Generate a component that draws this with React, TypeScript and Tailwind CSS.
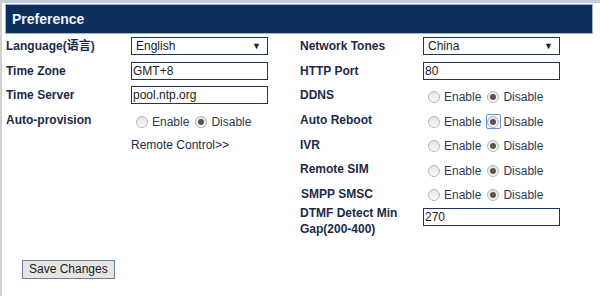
import React from 'react';

const font = { fontFamily: '"Liberation Sans", Arial, "Noto Sans CJK SC", sans-serif' };

const Radio: React.FC<{ checked?: boolean; focus?: boolean }> = ({ checked, focus }) => (
  <span className={focus ? 'inline-flex items-center justify-center w-[15px] h-[15px] -mx-[1.5px] border border-[#6b8fd6] rounded-[2px]' : 'inline-flex'}>
    <span className="inline-flex items-center justify-center w-[12px] h-[12px] rounded-full border border-[#b4b4b4] bg-gradient-to-b from-[#e4e4e4] to-[#fafafa]">
      {checked && <span className="w-[6px] h-[6px] rounded-full bg-[#555]" />}
    </span>
  </span>
);

const Toggle: React.FC<{ focus?: boolean }> = ({ focus }) => (
  <div className="flex items-center pl-[5px] pt-[3px] text-[12px] text-[#2b3a55]">
    <Radio />
    <span className="ml-[4px] mr-[6px]">Enable</span>
    <Radio checked focus={focus} />
    <span className="ml-[4px]">Disable</span>
  </div>
);

const TextInput: React.FC<{ value: string }> = ({ value }) => (
  <div className="w-[137px] h-[18px] border border-[#1d3464] bg-white px-[1px] text-[12px] leading-[16px] text-[#222]">{value}</div>
);

const Select: React.FC<{ value: string }> = ({ value }) => (
  <div className="w-[137px] h-[18px] border border-[#1d3464] bg-white pl-[4px] pr-[6px] flex items-center justify-between text-[12px] text-[#222]">
    <span>{value}</span>
    <span className="text-[9px]">▼</span>
  </div>
);

const Row: React.FC<{ label: React.ReactNode; labelW: string; children?: React.ReactNode }> = ({ label, labelW, children }) => (
  <div className="flex items-center h-[24.6px]">
    <div className={`${labelW} shrink-0 text-[12px] font-bold text-[#1c2a48]`}>{label}</div>
    {children}
  </div>
);

export default function App() {
  return (
    <div className="w-[600px] h-[296px] bg-white border-l-2 border-t-[3px] border-l-[#cfcfcf] border-t-[#c6cfdb] overflow-hidden" style={font}>
      <div className="ml-[3px] mt-[1px] w-[588px] h-[30px] bg-[#0b2e5d] border border-[#9fb1cc] flex items-center pl-[6px]">
        <span className="text-[14px] font-bold text-[#eef2f7]">Preference</span>
      </div>
      <div className="flex">
        <div className="w-[298px] pl-[4px]">
          <Row label="Language(语言)" labelW="w-[125px]"><Select value="English" /></Row>
          <Row label="Time Zone" labelW="w-[125px]"><TextInput value="GMT+8" /></Row>
          <Row label="Time Server" labelW="w-[125px]"><TextInput value="pool.ntp.org" /></Row>
          <Row label="Auto-provision" labelW="w-[125px]"><Toggle /></Row>
          <Row label="" labelW="w-[125px]">
            <span className="text-[12px] text-[#1c2a48]">Remote Control&gt;&gt;</span>
          </Row>
        </div>
        <div className="flex-1">
          <Row label="Network Tones" labelW="w-[123px]"><Select value="China" /></Row>
          <Row label="HTTP Port" labelW="w-[123px]"><TextInput value="80" /></Row>
          <Row label="DDNS" labelW="w-[123px]"><Toggle /></Row>
          <Row label="Auto Reboot" labelW="w-[123px]"><Toggle focus /></Row>
          <Row label="IVR" labelW="w-[123px]"><Toggle /></Row>
          <Row label="Remote SIM" labelW="w-[123px]"><Toggle /></Row>
          <Row label={<span className="pl-[1px]">SMPP SMSC</span>} labelW="w-[123px]"><Toggle /></Row>
          <div className="flex items-start h-[34px] pt-[2px]">
            <div className="w-[123px] shrink-0 -mt-[3px] text-[12px] font-bold leading-[16px] text-[#1c2a48]">
              DTMF Detect Min<br />Gap(200-400)
            </div>
            <TextInput value="270" />
          </div>
        </div>
      </div>
      <div className="pl-[20px] pt-[16px]">
        <button className="h-[19px] px-[6px] border border-[#6d80a3] bg-[#e4e4e4] text-[12px] leading-[14px] text-[#1a1a1a]">Save Changes</button>
      </div>
    </div>
  );
}
